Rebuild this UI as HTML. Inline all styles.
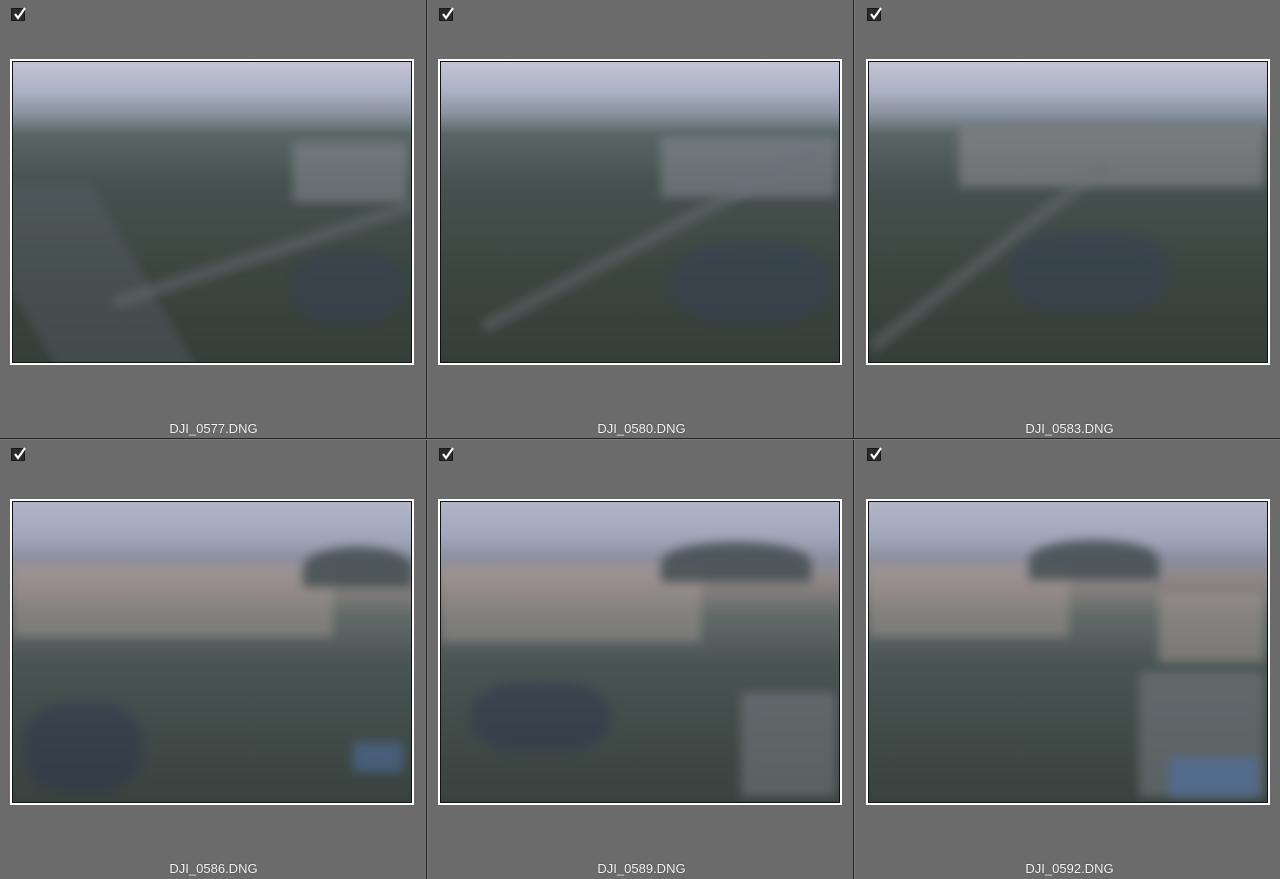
<!DOCTYPE html>
<html><head><meta charset="utf-8"><style>
*{margin:0;padding:0;box-sizing:border-box}
body{width:1280px;height:879px;background:#6a6a6a;position:relative;overflow:hidden;font-family:"Liberation Sans",sans-serif}
.cell{position:absolute;width:427px;height:439px;background:#6b6b6b}
.vl{position:absolute;top:0;width:2px;height:879px;background:#262626;border-right:1px solid #7a7a7a}
.hl{position:absolute;left:0;height:2px;width:1280px;background:#262626;border-bottom:1px solid #7a7a7a}
.cb{position:absolute;left:11px;top:8px;width:14px;height:13px;background:#2a2a2a;border:1px solid #1a1a1a}
.cb svg{position:absolute;left:0;top:-3px}
.fr{position:absolute;left:10px;top:59px;width:404px;height:306px;background:#fff;padding:2px}
.in{width:100%;height:100%;border:1px solid #111;position:relative;overflow:hidden}
.lb{position:absolute;top:421px;left:0;width:427px;text-align:center;color:#f4f4f4;font-size:13px;text-shadow:0 0 1px #333}
.a{background:linear-gradient(#c6c3d6 0%,#aab1c3 10%,#8a93a1 17%,#5a6666 24%,#465250 40%,#3b4640 70%,#353f39 100%)}
.b{background:linear-gradient(#b2b5c8 0%,#a0a6ba 12%,#8a8f9e 19%,#8e8686 26%,#626a68 38%,#485452 55%,#38423e 100%)}
.s{position:absolute;filter:blur(5px)}
</style></head><body>

<div class="cell" style="left:0;top:0"><div class="cb"><svg width="16" height="16"><path d="M3 8l3 4 7-10" stroke="#fff" stroke-width="2.2" fill="none"/></svg></div><div class="fr"><div class="in a">
<div class="s" style="left:280px;top:80px;width:115px;height:60px;background:#8d8f9a;opacity:.5"></div>
<div class="s" style="left:0;top:120px;width:140px;height:220px;background:#5d6470;opacity:.35;transform:skewX(30deg)"></div>
<div class="s" style="left:100px;top:235px;width:320px;height:12px;background:#6c7078;opacity:.5;transform:rotate(-18deg);transform-origin:0 0"></div>
<div class="s" style="left:280px;top:190px;width:110px;height:70px;background:#35405a;opacity:.45;border-radius:40%"></div>
</div></div><div class="lb">DJI_0577.DNG</div></div>

<div class="cell" style="left:428px;top:0"><div class="cb"><svg width="16" height="16"><path d="M3 8l3 4 7-10" stroke="#fff" stroke-width="2.2" fill="none"/></svg></div><div class="fr"><div class="in a">
<div class="s" style="left:220px;top:75px;width:175px;height:60px;background:#8d8f9a;opacity:.5"></div>
<div class="s" style="left:40px;top:260px;width:380px;height:12px;background:#6c7078;opacity:.5;transform:rotate(-28deg);transform-origin:0 0"></div>
<div class="s" style="left:230px;top:180px;width:160px;height:80px;background:#35405a;opacity:.45;border-radius:40%"></div>
</div></div><div class="lb">DJI_0580.DNG</div></div>

<div class="cell" style="left:856px;top:0;width:424px"><div class="cb"><svg width="16" height="16"><path d="M3 8l3 4 7-10" stroke="#fff" stroke-width="2.2" fill="none"/></svg></div><div class="fr"><div class="in a">
<div class="s" style="left:90px;top:65px;width:305px;height:60px;background:#9a9396;opacity:.5"></div>
<div class="s" style="left:0;top:280px;width:300px;height:12px;background:#6c7078;opacity:.5;transform:rotate(-38deg);transform-origin:0 0"></div>
<div class="s" style="left:140px;top:170px;width:160px;height:80px;background:#35405a;opacity:.45;border-radius:40%"></div>
</div></div><div class="lb">DJI_0583.DNG</div></div>

<div class="cell" style="left:0;top:440px"><div class="cb"><svg width="16" height="16"><path d="M3 8l3 4 7-10" stroke="#fff" stroke-width="2.2" fill="none"/></svg></div><div class="fr"><div class="in b">
<div class="s" style="left:0;top:60px;width:320px;height:75px;background:#a89b98;opacity:.45"></div>
<div class="s" style="left:290px;top:45px;width:110px;height:40px;background:#3e4a4c;border-radius:50% 50% 0 0;opacity:.8"></div>
<div class="s" style="left:10px;top:200px;width:120px;height:90px;background:#2c3550;opacity:.45;border-radius:40%"></div>
<div class="s" style="left:340px;top:240px;width:50px;height:30px;background:#4f6e9c;opacity:.6"></div>
</div></div><div class="lb">DJI_0586.DNG</div></div>

<div class="cell" style="left:428px;top:440px"><div class="cb"><svg width="16" height="16"><path d="M3 8l3 4 7-10" stroke="#fff" stroke-width="2.2" fill="none"/></svg></div><div class="fr"><div class="in b">
<div class="s" style="left:0;top:60px;width:260px;height:80px;background:#a89b98;opacity:.45"></div>
<div class="s" style="left:220px;top:40px;width:150px;height:40px;background:#3e4a4c;border-radius:50% 50% 0 0;opacity:.8"></div>
<div class="s" style="left:30px;top:180px;width:140px;height:70px;background:#2c3550;opacity:.45;border-radius:40%"></div>
<div class="s" style="left:300px;top:190px;width:95px;height:105px;background:#7d8088;opacity:.5"></div>
</div></div><div class="lb">DJI_0589.DNG</div></div>

<div class="cell" style="left:856px;top:440px;width:424px"><div class="cb"><svg width="16" height="16"><path d="M3 8l3 4 7-10" stroke="#fff" stroke-width="2.2" fill="none"/></svg></div><div class="fr"><div class="in b">
<div class="s" style="left:0;top:60px;width:200px;height:75px;background:#a89b98;opacity:.45"></div>
<div class="s" style="left:160px;top:38px;width:130px;height:40px;background:#3e4a4c;border-radius:50% 50% 0 0;opacity:.8"></div>
<div class="s" style="left:290px;top:90px;width:105px;height:70px;background:#a89b98;opacity:.5"></div>
<div class="s" style="left:270px;top:170px;width:125px;height:125px;background:#7d8088;opacity:.5"></div>
<div class="s" style="left:300px;top:255px;width:90px;height:40px;background:#4f6e9c;opacity:.7"></div>
</div></div><div class="lb">DJI_0592.DNG</div></div>

<div class="vl" style="left:426px"></div>
<div class="vl" style="left:853px"></div>
<div class="hl" style="top:438px"></div>
</body></html>
